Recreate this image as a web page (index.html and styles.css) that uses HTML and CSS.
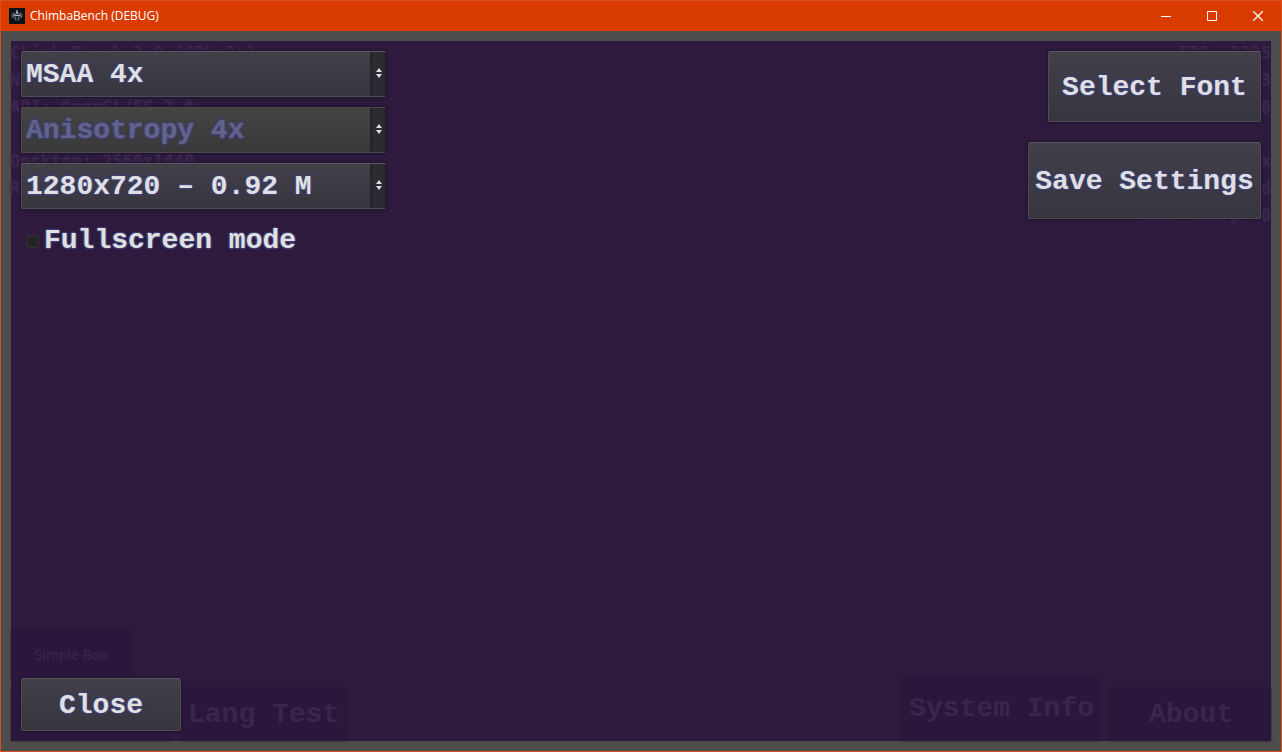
FILE: index.html
```html
<!DOCTYPE html>
<html lang="en">
<head>
<meta charset="utf-8">
<title>ChimbaBench (DEBUG)</title>
<link rel="stylesheet" href="styles.css">
</head>
<body>
<div class="window">
  <header class="titlebar">
    <svg class="app-icon" viewBox="0 0 16 16" aria-hidden="true">
      <rect width="16" height="16" fill="#0b1219"/>
      <path d="M2 7l2-3 2 1 2-3 2 3 2-1 2 3-1 3-2 0-1 3-2-1-2 1-1-3-2 0z" fill="#3b444b"/>
      <path d="M7 2h2v4H7zM4 6h2v2H4zM10 6h2v2h-2z" fill="#757e82"/>
      <path d="M7 4h2v1H7zM6 7h4v1H6z" fill="#b5bbbc"/>
      <path d="M6 9h1v3H6zM9 9h1v3H9zM3 8h1v2H3zM12 8h1v2h-1z" fill="#66605c"/>
      <path d="M7 8h2v3H7z" fill="#171d24"/>
    </svg>
    <h1 class="title">ChimbaBench (DEBUG)</h1>
    <button class="win-btn" aria-label="Minimize"><svg viewBox="0 0 10 10"><path d="M0 5.5h10"/></svg></button>
    <button class="win-btn" aria-label="Maximize"><svg viewBox="0 0 10 10"><path d="M.5.5h9v9h-9z"/></svg></button>
    <button class="win-btn" aria-label="Close window"><svg viewBox="0 0 10 10"><path d="M0 0l10 10M10 0L0 10" stroke-width="1.3"/></svg></button>
  </header>

  <main class="stage">
    <div class="backdrop" aria-hidden="true">
      <div class="stats">
        <div class="stat-list">
          <span>ChimbaBench 2.0 (GPLv2+)</span><span>N</span><span>API: OpenGL/ES 2.0</span><span></span><span>Desktop: 2560x1440</span><span>R</span>
        </div>
        <div class="stat-list stat-right">
          <span>FPS: 2205</span><span>3</span><span>0</span><span></span><span>x</span><span>d</span><span>Anim Sharp: 0</span>
        </div>
      </div>
      <div class="ghosts">
        <div class="ghost-group">
          <div class="ghost ghost-small">Simple Box</div>
          <div class="ghost-row">
            <div class="ghost ghost-blank"></div>
            <div class="ghost">Lang Test</div>
          </div>
        </div>
        <div class="ghost-row">
          <div class="ghost ghost-tall">System Info</div>
          <div class="ghost ghost-wide">About</div>
        </div>
      </div>
    </div>

    <section class="panel">
      <div class="top">
        <form class="options">
          <div class="dropdown">
            <select aria-label="Antialiasing"><option>MSAA 4x</option></select>
            <svg class="arrows" viewBox="0 0 6 10"><path d="M3 0l3 4H0zM3 10l3-4H0z"/></svg>
          </div>
          <div class="dropdown">
            <select aria-label="Anisotropy" disabled><option>Anisotropy 4x</option></select>
            <svg class="arrows" viewBox="0 0 6 10"><path d="M3 0l3 4H0zM3 10l3-4H0z"/></svg>
          </div>
          <div class="dropdown">
            <select aria-label="Resolution"><option>1280x720 – 0.92 M</option></select>
            <svg class="arrows" viewBox="0 0 6 10"><path d="M3 0l3 4H0zM3 10l3-4H0z"/></svg>
          </div>
          <label class="check"><input type="checkbox">Fullscreen mode</label>
        </form>
        <div class="actions">
          <button class="btn btn-font">Select Font</button>
          <button class="btn btn-save">Save Settings</button>
        </div>
      </div>
      <button class="btn btn-close">Close</button>
    </section>
  </main>
</div>
</body>
</html>
```
FILE: styles.css
```css
* { box-sizing: border-box; }

body {
  margin: 0;
  background: #4d4d4d;
}

.window {
  display: flex;
  flex-direction: column;
  min-height: 100vh;
  border: 1px solid #d84f20;
}

.titlebar {
  display: flex;
  align-items: center;
  height: 30px;
  padding-left: 8px;
  background: #da3b01;
  color: #fff;
}

.app-icon {
  width: 16px;
  height: 16px;
}

.title {
  flex: 1;
  margin: 0 0 0 5px;
  font: 12px/16px "Open Sans", "Noto Sans", sans-serif;
}

.win-btn {
  display: grid;
  place-items: center;
  width: 46px;
  height: 30px;
  padding: 0;
  border: 0;
  background: none;
}

.win-btn svg {
  width: 10px;
  height: 10px;
  fill: none;
  stroke: #fff;
}

.stage {
  flex: 1;
  display: grid;
  padding: 10px;
  font: bold 28px/32px "Courier 10 Pitch", "Liberation Mono", monospace;
}

.backdrop,
.panel {
  grid-area: 1 / 1;
  display: flex;
  flex-direction: column;
  justify-content: space-between;
}

.backdrop {
  background: #2d1a3d;
  color: #3a264b;
}

.stats {
  display: flex;
  justify-content: space-between;
  margin-left: -1px;
  font: bold 17px/24px "DejaVu Sans Mono", monospace;
  text-shadow: 0 0 2px #35244a;
}

.stat-list {
  display: grid;
  grid-auto-rows: 27px;
}

.stat-right { text-align: right; }

.ghosts,
.ghost-row {
  display: flex;
  align-items: flex-end;
}

.ghosts { justify-content: space-between; }

.ghost-row { gap: 10px; }

.ghost {
  display: grid;
  place-items: center;
  height: 53px;
  padding: 1px 7px 0;
  background: #2b173b;
  box-shadow: 0 0 2px #29163a;
}

.ghost-small {
  width: 120px;
  height: 50px;
  padding-top: 0;
  margin-bottom: 8px;
  font: 14px/20px "Noto Sans", sans-serif;
}

.ghost-blank,
.ghost-wide { width: 160px; }

.ghost-tall { height: 65px; }

.panel {
  position: relative;
  padding: 10px;
}

.top {
  display: flex;
  justify-content: space-between;
  align-items: flex-start;
}

.options {
  display: grid;
  gap: 10px;
}

.dropdown {
  position: relative;
  width: 365px;
}

select,
.btn,
.check {
  color: #e0e0e0;
  font: inherit;
  text-shadow: 1px 0 1px #42447a, -1px 0 1px #42447a, 0 1px 1px #42447a, 0 -1px 1px #42447a, 0 0 3px #42447a;
}

select,
.btn {
  border: 1px solid #4d4b54;
  border-top-color: #5a5862;
  border-radius: 2px;
  background: linear-gradient(#423f4a, #37353e);
  box-shadow: 0 0 2px 1px #221430;
}

select {
  display: block;
  appearance: none;
  width: 100%;
  height: 46px;
  padding: 2px 20px 0 4px;
  border-width: 1px 0 1px 1px;
  background: linear-gradient(90deg, #242329, #2d2c32 30%, #2b2a30 80%, #222127) right / 16px 100% no-repeat border-box, linear-gradient(#423f4a, #37353e);
}

select:disabled {
  opacity: 1;
  color: #63638a;
  border-color: #4a4a4a;
  background: linear-gradient(90deg, #242329, #2d2c32 30%, #2b2a30 80%, #222127) right / 16px 100% no-repeat border-box, linear-gradient(#444, #393939);
}

.arrows {
  position: absolute;
  top: 17px;
  right: 4px;
  width: 6px;
  height: 10px;
  fill: #e0e0e0;
  pointer-events: none;
}

.check {
  display: flex;
  align-items: center;
  gap: 5px;
  height: 44px;
  padding-left: 5px;
}

.check input {
  appearance: none;
  width: 13px;
  height: 13px;
  margin: 0;
  border: 1px solid #36303b;
  border-radius: 2px;
  background: #252528;
}

.actions {
  display: flex;
  flex-direction: column;
  align-items: flex-end;
  gap: 20px;
}

.btn { padding: 2px 6px 0; }

.btn-font {
  min-width: 213px;
  height: 71px;
}

.btn-save {
  min-width: 233px;
  height: 77px;
}

.btn-close {
  align-self: flex-start;
  width: 160px;
  height: 53px;
}
```
